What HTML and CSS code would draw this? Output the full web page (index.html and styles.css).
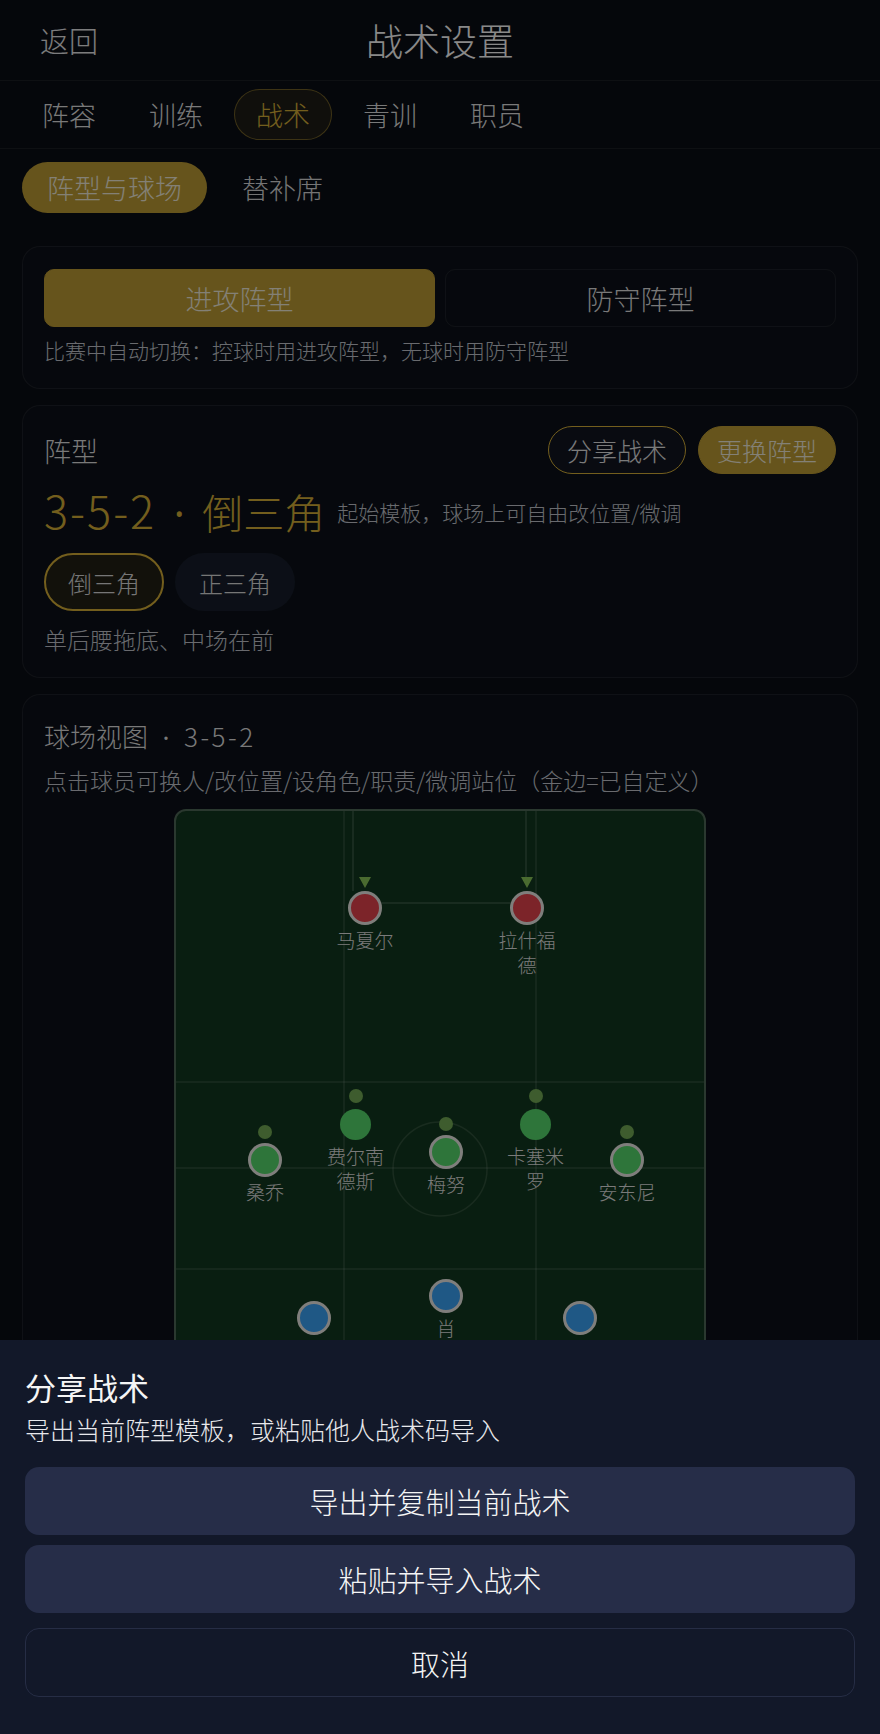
FILE: index.html
```html
<!DOCTYPE html>
<html lang="zh-CN">
<head>
    <meta charset="UTF-8">
    <meta name="viewport" content="width=device-width, initial-scale=1.0">
    <title>战术设置</title>
    <link rel="stylesheet" href="styles.css">
</head>
<body>
    <header class="topbar">
        <button class="back">返回</button>
        <h1 class="title">战术设置</h1>
        <span></span>
    </header>

    <nav class="tabs">
        <a class="tab">阵容</a>
        <a class="tab">训练</a>
        <a class="tab active">战术</a>
        <a class="tab">青训</a>
        <a class="tab">职员</a>
    </nav>

    <div class="subtabs">
        <a class="subtab active">阵型与球场</a>
        <a class="subtab">替补席</a>
    </div>

    <main class="content">
        <!-- attack / defence switch -->
        <section class="card">
            <div class="seg">
                <button class="seg-btn active">进攻阵型</button>
                <button class="seg-btn">防守阵型</button>
            </div>
            <p class="hint hint-small">比赛中自动切换：控球时用进攻阵型，无球时用防守阵型</p>
        </section>

        <!-- formation -->
        <section class="card">
            <div class="card-head">
                <span class="label">阵型</span>
                <div class="actions">
                    <button class="pill outline">分享战术</button>
                    <button class="pill solid">更换阵型</button>
                </div>
            </div>
            <div class="formation">
                <span class="formation-name"><span class="digits">3-5-2</span><span class="sep">·</span>倒三角</span>
                <span class="formation-note">起始模板，球场上可自由改位置/微调</span>
            </div>
            <div class="chips">
                <span class="chip active">倒三角</span>
                <span class="chip">正三角</span>
            </div>
            <p class="hint hint-gap">单后腰拖底、中场在前</p>
        </section>

        <!-- pitch -->
        <section class="card pitch-card">
            <h2 class="pitch-title">球场视图<span class="sep sep-sm">·</span><span class="digits-sm">3-5-2</span></h2>
            <p class="hint hint-pitch">点击球员可换人/改位置/设角色/职责/微调站位（金边=已自定义）</p>
            <div class="pitch">
                <svg class="pitch-lines" viewBox="0 0 528 736" width="528" height="736">
                    <g stroke="rgba(255,255,255,0.12)" stroke-width="1.5" fill="none">
                        <line x1="168" y1="0" x2="168" y2="736"/>
                        <line x1="360" y1="0" x2="360" y2="736"/>
                        <line x1="0" y1="271" x2="528" y2="271"/>
                        <line x1="0" y1="357" x2="528" y2="357"/>
                        <line x1="0" y1="458" x2="528" y2="458"/>
                        <circle cx="264" cy="358" r="47"/>
                    </g>
                    <g stroke="rgba(255,255,255,0.17)" stroke-width="1.5">
                        <line x1="177" y1="0" x2="177" y2="80"/>
                        <line x1="350" y1="0" x2="350" y2="66"/>
                        <line x1="189" y1="92" x2="351" y2="92"/>
                    </g>
                    <path d="M183 66h12l-6 11z M345 66h12l-6 11z" fill="#87c358"/>
                </svg>

                <div class="player" style="left:189px;top:62px"><i class="dot none"></i><span class="disc fwd"></span><span class="name">马夏尔</span></div>
                <div class="player" style="left:351px;top:62px"><i class="dot none"></i><span class="disc fwd"></span><span class="name">拉什福德</span></div>

                <div class="player" style="left:89px;top:314px"><i class="dot"></i><span class="disc mid"></span><span class="name">桑乔</span></div>
                <div class="player" style="left:179.5px;top:278px"><i class="dot"></i><span class="disc mid plain"></span><span class="name">费尔南德斯</span></div>
                <div class="player" style="left:270px;top:306px"><i class="dot"></i><span class="disc mid"></span><span class="name">梅努</span></div>
                <div class="player" style="left:359.5px;top:278px"><i class="dot"></i><span class="disc mid plain"></span><span class="name">卡塞米罗</span></div>
                <div class="player" style="left:451px;top:314px"><i class="dot"></i><span class="disc mid"></span><span class="name">安东尼</span></div>

                <div class="player" style="left:137.5px;top:472px"><i class="dot none"></i><span class="disc def"></span><span class="name">马丁内斯</span></div>
                <div class="player" style="left:270px;top:450px"><i class="dot none"></i><span class="disc def"></span><span class="name">肖</span></div>
                <div class="player" style="left:404px;top:472px"><i class="dot none"></i><span class="disc def"></span><span class="name">瓦拉内</span></div>
            </div>
        </section>
    </main>

    <div class="backdrop"></div>

    <div class="sheet">
        <h3 class="sheet-title">分享战术</h3>
        <p class="sheet-sub">导出当前阵型模板，或粘贴他人战术码导入</p>
        <div class="sheet-actions">
            <button class="sheet-btn">导出并复制当前战术</button>
            <button class="sheet-btn">粘贴并导入战术</button>
            <button class="sheet-btn ghost">取消</button>
        </div>
    </div>
</body>
</html>
```

FILE: styles.css
```css
/* === Theme === */
:root {
    --bg: #0a0d14;
    --card: #0c1018;
    --line: rgba(255, 255, 255, 0.07);
    --text: #e2e2e4;
    --muted: #bfc2c9;
    --gold: #d2ac36;
    --gold-fill: #ba9933;
    --on-gold: #efe9d8;
}

* {
    box-sizing: border-box;
}

body {
    margin: 0;
    background: var(--bg);
    color: var(--text);
    font-family: "Noto Sans CJK SC", "Noto Sans", sans-serif;
    font-weight: 300;
}

button {
    font-family: inherit;
    font-weight: inherit;
    cursor: pointer;
}

/* === Header === */
.topbar {
    height: 81px;
    display: grid;
    grid-template-columns: 1fr auto 1fr;
    align-items: center;
    padding: 0 40px;
    border-bottom: 1px solid var(--line);
}

.back {
    justify-self: start;
    padding: 0;
    border: none;
    background: none;
    color: var(--text);
    font-size: 29px;
}

.title {
    margin: 0;
    font-size: 37px;
    font-weight: 300;
    color: #fafafa;
}

/* === Tabs === */
.tabs {
    display: flex;
    gap: 9px;
    padding: 8px 20px;
    border-bottom: 1px solid var(--line);
}

.tab {
    height: 51px;
    padding: 0 21px;
    border: 1px solid transparent;
    border-radius: 26px;
    font-size: 27px;
    line-height: 49px;
    color: #dcdcdc;
}

.tab.active {
    border-color: rgba(212, 175, 55, 0.45);
    background: rgba(212, 175, 55, 0.1);
    color: var(--gold);
}

.subtabs {
    display: flex;
    gap: 10px;
    padding: 13px 22px 0;
}

.subtab {
    height: 51px;
    padding: 0 25px;
    border-radius: 26px;
    font-size: 27px;
    line-height: 51px;
    color: #d4d4d4;
}

.subtab.active {
    background: var(--gold-fill);
    color: var(--on-gold);
}

/* === Cards === */
.content {
    display: flex;
    flex-direction: column;
    gap: 16px;
    padding: 33px 22px 0;
}

.card {
    background: var(--card);
    border: 1px solid var(--line);
    border-radius: 18px;
    padding: 22px 21px 23px;
}

.seg {
    display: grid;
    grid-template-columns: 1fr 1fr;
    gap: 10px;
}

.seg-btn {
    height: 58px;
    border: 1px solid var(--line);
    border-radius: 10px;
    background: transparent;
    color: #dcdcdc;
    font-size: 27px;
}

.seg-btn.active {
    border-color: var(--gold-fill);
    background: var(--gold-fill);
    color: var(--on-gold);
}

.hint {
    margin: 8px 0 0;
    font-size: 23px;
    line-height: 30px;
    color: var(--muted);
}

.hint-small {
    font-size: 21px;
}

.hint-gap {
    margin-top: 13px;
}

.hint-pitch {
    margin-top: 11px;
}

.card-head {
    display: flex;
    align-items: center;
    justify-content: space-between;
    margin-top: -2px;
}

.label {
    font-size: 27px;
    color: #dcdcdc;
}

.actions {
    display: flex;
    gap: 12px;
}

.pill {
    height: 48px;
    padding: 0 18px;
    border-radius: 24px;
    font-size: 25px;
}

.pill.outline {
    border: 1.5px solid var(--gold);
    background: #111520;
    color: #e0e0e0;
}

.pill.solid {
    border: 1.5px solid var(--gold-fill);
    background: var(--gold-fill);
    color: var(--on-gold);
}

.formation {
    display: flex;
    align-items: center;
    gap: 12px;
    margin-top: 10px;
}

.formation-name {
    font-size: 41px;
    line-height: 52px;
    color: var(--gold);
}

.digits {
    font-size: 45px;
    letter-spacing: 2px;
}

.sep {
    display: inline-block;
    width: 46px;
    text-align: center;
    font-family: "Noto Sans", sans-serif;
    font-weight: 400;
}

.formation-note {
    font-size: 21px;
    color: var(--muted);
}

.chips {
    display: flex;
    gap: 11px;
    margin-top: 14px;
}

.chip {
    display: flex;
    align-items: center;
    height: 58px;
    padding: 0 22px;
    border: 2.5px solid transparent;
    border-radius: 29px;
    background: #161d2a;
    color: #d8d8d8;
    font-size: 24px;
}

.chip.active {
    border-color: var(--gold);
    background: #221f14;
}

/* === Pitch === */
.pitch-card {
    padding-top: 24px;
}

.pitch-title {
    margin: 0;
    font-size: 26px;
    line-height: 34px;
    font-weight: 300;
    color: #dcdcdc;
}

.sep-sm {
    width: 36px;
}

.digits-sm {
    letter-spacing: 2.5px;
}

.pitch {
    position: relative;
    width: 532px;
    height: 740px;
    margin: 14px auto 0;
    background: #12381f;
    border: 2px solid #4e6656;
    border-radius: 12px;
    overflow: hidden;
}

.pitch-lines {
    position: absolute;
    top: 0;
    left: 0;
}

.player {
    position: absolute;
    width: 64px;
    margin-left: -32px;
    display: flex;
    flex-direction: column;
    align-items: center;
}

.dot {
    width: 14px;
    height: 14px;
    border-radius: 50%;
    background: #71a854;
}

.dot.none {
    visibility: hidden;
}

.disc {
    width: 34px;
    height: 34px;
    margin-top: 4px;
    border: 3px solid #e8e6e2;
    border-radius: 50%;
}

.disc.plain {
    width: 31px;
    height: 31px;
    margin: 5.5px 0 1.5px;
    border: none;
}

.fwd { background: #e2434c; }
.mid { background: #54d66a; }
.def { background: #3aa0f2; }

.name {
    width: 60px;
    margin-top: 2px;
    font-size: 19px;
    line-height: 25px;
    text-align: center;
    color: #dedede;
}

/* === Share sheet === */
.backdrop {
    position: fixed;
    inset: 0;
    background: rgba(0, 0, 0, 0.45);
}

.sheet {
    position: fixed;
    left: 0;
    right: 0;
    bottom: 0;
    padding: 27px 25px 37px;
    background: #121829;
}

.sheet-title {
    margin: 0;
    font-size: 31px;
    line-height: 40px;
    font-weight: 400;
    color: #f5f5f5;
}

.sheet-sub {
    margin: 6px 0 0;
    font-size: 25px;
    line-height: 32px;
    color: #e8e8ec;
}

.sheet-actions {
    display: flex;
    flex-direction: column;
    gap: 10px;
    margin-top: 22px;
}

.sheet-btn {
    height: 68px;
    border: none;
    border-radius: 14px;
    background: #262d48;
    color: #f5f5f5;
    font-size: 29px;
}

.sheet-btn.ghost {
    height: 69px;
    margin-top: 5px;
    border: 1.5px solid #262d45;
    background: transparent;
}
```
